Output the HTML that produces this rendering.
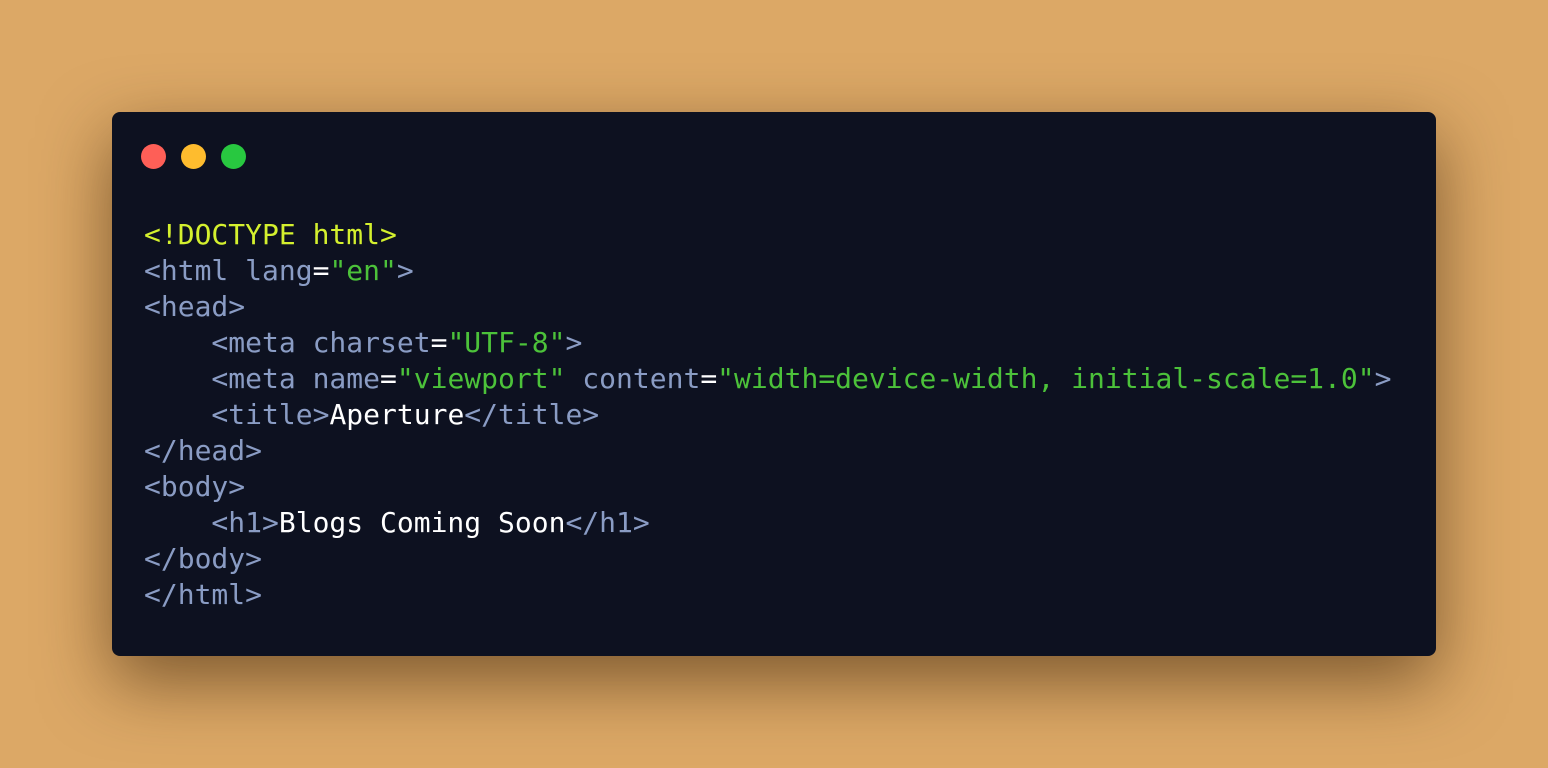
<!DOCTYPE html>
<html><head><style>
html,body{margin:0;padding:0;}
body{width:1548px;height:768px;background:#dca866;position:relative;overflow:hidden;}
.card{position:absolute;left:112px;top:112px;width:1324px;height:544px;background:#0d1120;border-radius:8px;box-shadow:0 25px 70px rgba(60,35,10,0.6);}
.dot{position:absolute;top:144px;width:25px;height:25px;border-radius:50%;}
pre{position:absolute;left:144px;top:217px;margin:0;font-family:"DejaVu Sans Mono","Liberation Mono",monospace;font-size:28px;line-height:36px;color:#8a9cc4;}
.y{color:#d4f02e}.g{color:#4cc23a}.w{color:#fff}
</style></head><body>
<div class="card"></div>
<div class="dot" style="left:141px;background:#fe5f57"></div>
<div class="dot" style="left:181px;background:#febc2e"></div>
<div class="dot" style="left:221px;background:#28c840"></div>
<pre><span class="y">&lt;!DOCTYPE html&gt;</span>
&lt;html lang<span class="w">=</span><span class="g">"en"</span>&gt;
&lt;head&gt;
    &lt;meta charset<span class="w">=</span><span class="g">"UTF-8"</span>&gt;
    &lt;meta name<span class="w">=</span><span class="g">"viewport"</span> content<span class="w">=</span><span class="g">"width=device-width, initial-scale=1.0"</span>&gt;
    &lt;title&gt;<span class="w">Aperture</span>&lt;/title&gt;
&lt;/head&gt;
&lt;body&gt;
    &lt;h1&gt;<span class="w">Blogs Coming Soon</span>&lt;/h1&gt;
&lt;/body&gt;
&lt;/html&gt;</pre>
</body></html>
